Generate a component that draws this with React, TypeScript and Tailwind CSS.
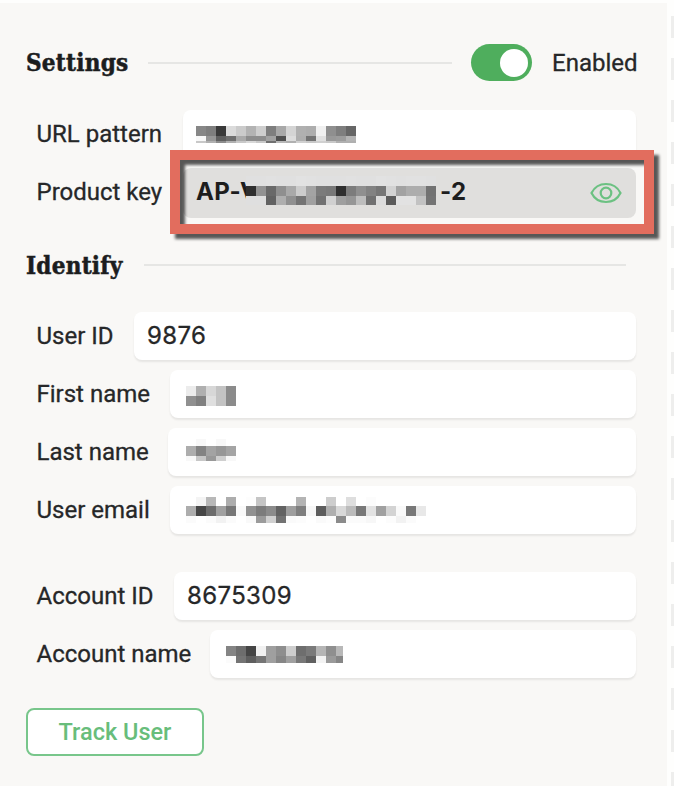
import type { ReactNode } from 'react'

// ─── redacted values ────────────────────────────────────────────────────────

type Row = { h: number; cells: string }

// two hex digits per 10px cell, '--' leaves the cell empty
const URL_ROWS: Row[] = [
  { h: 10, cells: '877e39dbcbb3ce7ea8d4b0adf08f7e66' },
  { h: 5, cells: 'f8965f6faa8d8da14fdcae73e0999cb4' },
  { h: 2, cells: 'c8b08cb0c8d8c870b8b0d0c8d0c8b0b0' },
]

const KEY_ROWS: Row[] = [
  { h: 10, cells: 'e0e0e1e0e0e2e1e0e0e0e1e0e0e2e1e0e1e1e0' },
  { h: 10, cells: '2f92698fa9cca37b782f7c8f8276d2a2adad72' },
  { h: 9, cells: 'dfdf62ae9074a072d09f96bd71dc5be2e2c274' },
]

const FIRST_ROWS: Row[] = [
  { h: 10, cells: 'ecafd7c38b' },
  { h: 10, cells: '9080dfc38b' },
]

const LAST_ROWS: Row[] = [
  { h: 7, cells: '--f8fff8--' },
  { h: 10, cells: 'ad83a397a4' },
  { h: 5, cells: 'f8c799cff8' },
]

const EMAIL_ROWS: Row[] = [
  { h: 9, cells: '--f4b8ffadfffdc5ffffffb4ffffcdffdefffc----------' },
  { h: 10, cells: 'ad466ca077f9917c8b629e7ff75dafd8bb78e2a0d3f978e8' },
  { h: 7, cells: 'fbfffbf2fbfff99bd072fafcfffafd8bfbfbf7fffcf2fbff' },
]

const ACCOUNT_ROWS: Row[] = [
  { h: 10, cells: '846d45f19f8ecd6e7ab58fb8' },
  { h: 7, cells: 'fb745e759f86a07860f39a86' },
]

function Mosaic({ rows, className }: { rows: Row[]; className?: string }) {
  return (
    <div className={className}>
      {rows.map((row, i) => (
        <div key={i} className="flex" style={{ height: row.h }}>
          {(row.cells.match(/../g) ?? []).map((c, j) => (
            <span
              key={j}
              className="w-2.5 shrink-0"
              style={{ backgroundColor: c === '--' ? 'transparent' : `#${c}${c}${c}` }}
            />
          ))}
        </div>
      ))}
    </div>
  )
}

// ─── form pieces ────────────────────────────────────────────────────────────

function SectionHeading({ children }: { children: ReactNode }) {
  return (
    <h2 className="whitespace-nowrap font-['DejaVu_Serif_Condensed','DejaVu_Serif',serif] text-[24px] font-bold leading-none tracking-[0.25px] text-[#1c1d1e] [-webkit-text-stroke:0.5px] [font-stretch:condensed]">
      {children}
    </h2>
  )
}

function FieldLabel({ width, children }: { width: string; children: ReactNode }) {
  return (
    <label
      className={`${width} shrink-0 whitespace-nowrap pl-[10.5px] text-[24px] leading-[48px] [-webkit-text-stroke:0.3px]`}
    >
      {children}
    </label>
  )
}

function Field({
  label,
  labelWidth,
  children,
}: {
  label: string
  labelWidth: string
  children?: ReactNode
}) {
  return (
    <div className="flex h-12">
      <FieldLabel width={labelWidth}>{label}</FieldLabel>
      <div className="flex flex-1 rounded-lg bg-white pl-[13px] font-[Inter,sans-serif] text-[24px] leading-[48px] tracking-[0.35px] shadow-[0_2px_2px_rgba(0,0,0,0.08)] [-webkit-text-stroke:0.3px]">
        {children}
      </div>
    </div>
  )
}

function EyeIcon() {
  return (
    <svg width="32" height="22" viewBox="0 0 32 22" fill="none" stroke="#6cc182" strokeWidth="2.2">
      <path d="M1.500 11C4 6 9 2 16 2S28 6 30.500 11C28 16 23 20 16 20S4 16 1.500 11Z" />
      <circle cx="16" cy="11" r="5.300" />
    </svg>
  )
}

export default function App() {
  return (
    <div className="flex h-[786px] w-[674px] overflow-hidden bg-[#fefefd] pt-[3px] font-[Roboto,sans-serif] text-[#262728]">
      <main className="h-full w-[667px] shrink-0 bg-[#f9f8f6] pl-[26px] pr-[31px]">
        {/* Settings */}
        <div className="flex h-[107px] items-center pt-[12px]">
          <div className="w-[122px] shrink-0 pt-px">
            <SectionHeading>Settings</SectionHeading>
          </div>
          <div className="h-0.5 w-[304px] shrink-0 bg-[#e6e6e4]" />
          <div className="ml-[19px] flex h-[37px] w-[61px] shrink-0 items-center justify-end rounded-full bg-[#4fae5d] pr-1">
            <div className="size-7 rounded-full bg-white" />
          </div>
          <span className="-mr-1 ml-5 text-[24px] leading-none [-webkit-text-stroke:0.3px]">Enabled</span>
        </div>

        <div className="relative flex flex-col gap-2.5">
          <Field label="URL pattern" labelWidth="w-[157px]">
            <Mosaic rows={URL_ROWS} className="pt-4" />
          </Field>
          <div className="flex h-[50px]">
            <FieldLabel width="w-[157px]">Product key</FieldLabel>
            <div className="flex flex-1 rounded-lg bg-[#e0dfdd] pl-[13px] pr-3.5 font-[Inter,sans-serif] text-[24px] font-bold leading-[48px] tracking-[0.3px] text-[#1d1d1d]">
              <span className="w-[50px] shrink-0 whitespace-nowrap">AP-V</span>
              <Mosaic rows={KEY_ROWS} className="pt-2" />
              <span className="ml-1">-2</span>
              <div className="ml-auto flex items-center">
                <EyeIcon />
              </div>
            </div>
          </div>
          {/* callout frame over the product key */}
          <div className="absolute left-[144px] top-10 h-[84px] w-[484px] border-[10px] border-[#e26d5e] drop-shadow-[5px_5px_1.5px_rgba(0,0,0,0.65)]" />
        </div>

        {/* Identify */}
        <div className="flex h-[94px] items-center">
          <div className="w-[118px] shrink-0 pt-px">
            <SectionHeading>Identify</SectionHeading>
          </div>
          <div className="h-0.5 w-[482px] bg-[#e6e6e4]" />
        </div>

        <div className="flex flex-col gap-2.5">
          <Field label="User ID" labelWidth="w-[108px]">
            9876
          </Field>
          <Field label="First name" labelWidth="w-[144px]">
            <Mosaic rows={FIRST_ROWS} className="ml-[3px] pt-4" />
          </Field>
          <Field label="Last name" labelWidth="w-[142px]">
            <Mosaic rows={LAST_ROWS} className="ml-[5px] pt-[11px]" />
          </Field>
          <Field label="User email" labelWidth="w-[144px]">
            <Mosaic rows={EMAIL_ROWS} className="ml-[3px] pt-[11px]" />
          </Field>
        </div>

        <div className="mt-[38px] flex flex-col gap-2.5">
          <Field label="Account ID" labelWidth="w-[148px]">
            8675309
          </Field>
          <Field label="Account name" labelWidth="w-[184px]">
            <Mosaic rows={ACCOUNT_ROWS} className="ml-[3px] w-[117px] overflow-hidden pt-4" />
          </Field>
        </div>

        <button className="mt-[30px] flex h-12 w-[178px] items-center justify-center rounded-lg border-2 border-[#78c68b] bg-white pt-px text-[23.5px] font-medium leading-none text-[#68bd7b]">
          Track User
        </button>
      </main>

      {/* dashed page edge */}
      <div className="ml-1 flex flex-col gap-5 pt-[13px]">
        {Array.from({ length: 19 }, (_, i) => (
          <div key={i} className="h-[22px] w-[3px] shrink-0 bg-[#eeeeed]" />
        ))}
      </div>
    </div>
  )
}
